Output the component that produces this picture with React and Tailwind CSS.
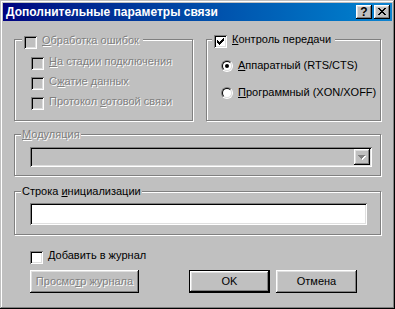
import React from 'react';

const raised = 'shadow-[inset_-1px_-1px_0_#000,inset_1px_1px_0_#fff,inset_-2px_-2px_0_#808080,inset_2px_2px_0_#dfdfdf]';
const sunken = 'shadow-[inset_1px_1px_0_#808080,inset_-1px_-1px_0_#fff,inset_2px_2px_0_#000,inset_-2px_-2px_0_#dfdfdf]';
const dim = 'text-[#808080] [text-shadow:1px_1px_0_#fff]';

const Check = ({ checked, disabled }) => (
  <span className={`relative block w-[13px] h-[13px] shrink-0 ${disabled ? 'bg-[#c0c0c0]' : 'bg-white'} ${sunken}`}>
    {checked && (
      <svg className="absolute left-[3px] top-[3px]" width="7" height="7" viewBox="0 0 7 7" shapeRendering="crispEdges">
        <path d="M6 0h1v1h-1z M5 1h2v1h-2z M0 2h1v1h-1z M4 2h3v1h-3z M0 3h2v1h-2z M3 3h3v1h-3z M0 4h5v1h-5z M1 5h3v1h-3z M2 6h1v1h-1z" fill="#000" />
      </svg>
    )}
  </span>
);

const Radio = ({ checked }) => (
  <span className="block w-[12px] h-[12px] shrink-0 rounded-full border border-t-[#808080] border-l-[#808080] border-r-white border-b-white">
    <span className="flex items-center justify-center w-full h-full rounded-full bg-white border border-t-black border-l-black border-r-[#dfdfdf] border-b-[#dfdfdf]">
      {checked && <span className="block w-[4px] h-[4px] rounded-full bg-black" />}
    </span>
  </span>
);

// label text sits with its cap top level with the box top, like the old dialogs
const Label = ({ children, disabled, className = '' }) => (
  <span className={`leading-[11px] -mt-[1px] whitespace-nowrap ${disabled ? dim : 'text-black'} ${className}`}>{children}</span>
);

const CheckRow = ({ checked, disabled, children, className = '' }) => (
  <div className={`flex items-start gap-[5px] ${className}`}>
    <Check checked={checked} disabled={disabled} />
    <Label disabled={disabled}>{children}</Label>
  </div>
);

const Group = ({ className = '', legend, legendClass = '', children }) => (
  <div className={`relative border border-[#808080] shadow-[1px_1px_0_#fff,inset_1px_1px_0_#fff] ${className}`}>
    <div className={`absolute bg-[#c0c0c0] ${legendClass}`}>{legend}</div>
    {children}
  </div>
);

const Button = ({ children, disabled, isDefault, className = '' }) => (
  <div className={`h-[23px] ${isDefault ? 'border border-black' : ''} ${className}`}>
    <div className={`h-full flex items-center justify-center bg-[#c0c0c0] ${raised} ${disabled ? dim : 'text-black'}`}>
      {children}
    </div>
  </div>
);

export default function App() {
  return (
    <div className="w-[395px] h-[309px] bg-[#c0c0c0] p-[3px] flex flex-col font-['Liberation_Sans',Arial,sans-serif] text-[11px] shadow-[inset_-1px_-1px_0_#000,inset_1px_1px_0_#c0c0c0,inset_-2px_-2px_0_#808080,inset_2px_2px_0_#fff]">
      {/* title bar */}
      <div className="h-[18px] flex items-center justify-between bg-gradient-to-r from-[#000080] to-[#1084d0] pl-[3px] pr-[2px]">
        <span className="text-white font-bold text-[12px] leading-none whitespace-nowrap">Дополнительные параметры связи</span>
        <div className="flex gap-[2px]">
          <div className={`w-[16px] h-[14px] bg-[#c0c0c0] ${raised} flex items-center justify-center`}>
            <span className="font-bold text-[12px] leading-none text-black -mt-[1px]">?</span>
          </div>
          <div className={`w-[16px] h-[14px] bg-[#c0c0c0] ${raised} flex items-center justify-center`}>
            <svg width="8" height="7" viewBox="0 0 8 7" shapeRendering="crispEdges" className="-mt-[1px]">
              <path d="M0 0h2v1h-2z M6 0h2v1h-2z M1 1h2v1h-2z M5 1h2v1h-2z M2 2h4v1h-4z M3 3h2v1h-2z M2 4h4v1h-4z M1 5h2v1h-2z M5 5h2v1h-2z M0 6h2v1h-2z M6 6h2v1h-2z" fill="#000" />
            </svg>
          </div>
        </div>
      </div>

      {/* body */}
      <div className="flex flex-col pl-[11px]">
        <div className="flex mt-[18px]">
          <Group
            className="w-[179px] h-[82px] pl-[16px] pt-[17px]"
            legendClass="left-[7px] top-[-4px] pl-[2px] pr-[4px]"
            legend={<CheckRow disabled><u>О</u>бработка ошибок</CheckRow>}
          >
            <div className="flex flex-col gap-[7px]">
              <CheckRow disabled><u>Н</u>а стадии подключения</CheckRow>
              <CheckRow disabled>С<u>ж</u>атие данных</CheckRow>
              <CheckRow disabled>Протокол <u>с</u>отовой связи</CheckRow>
            </div>
          </Group>
          <Group
            className="w-[175px] h-[82px] ml-[13px] pl-[14px] pt-[20px]"
            legendClass="left-[5px] top-[-5px] pl-[2px] pr-[4px]"
            legend={<CheckRow checked><u>К</u>онтроль передачи</CheckRow>}
          >
            <div className="flex flex-col gap-[15px]">
              <div className="flex items-start gap-[5px]">
                <Radio checked />
                <Label className="mt-0"><u>А</u>ппаратный (RTS/CTS)</Label>
              </div>
              <div className="flex items-start gap-[5px]">
                <Radio />
                <Label className="mt-0"><u>П</u>рограммный (XON/XOFF)</Label>
              </div>
            </div>
          </Group>
        </div>

        <Group
          className="w-[367px] h-[42px] mt-[13px] pl-[15px] pt-[12px]"
          legendClass="left-[6px] top-[-7px] px-[1px] leading-[13px]"
          legend={<span className={dim}><u>М</u>одуляция</span>}
        >
          <div className={`w-[342px] h-[20px] bg-[#c0c0c0] ${sunken} flex justify-end items-center pr-[2px]`}>
            <div className={`w-[16px] h-[16px] bg-[#c0c0c0] ${raised} flex items-center justify-center`}>
              <svg width="8" height="5" viewBox="0 0 8 5" shapeRendering="crispEdges">
                <path d="M1 1h7v1h-7z M2 2h5v1h-5z M3 3h3v1h-3z M4 4h1v1h-1z" fill="#fff" />
                <path d="M0 0h7v1h-7z M1 1h5v1h-5z M2 2h3v1h-3z M3 3h1v1h-1z" fill="#808080" />
              </svg>
            </div>
          </div>
        </Group>

        <Group
          className="w-[367px] h-[44px] mt-[15px] pl-[15px] pt-[11px]"
          legendClass="left-[6px] top-[-7px] px-[1px] leading-[13px]"
          legend={<span className="text-black">Строка <u>и</u>нициализации</span>}
        >
          <div className={`w-[337px] h-[22px] bg-white ${sunken}`} />
        </Group>

        <CheckRow className="mt-[16px] ml-[16px]"><u>Д</u>обавить в журнал</CheckRow>

        <div className="flex mt-[6px] ml-[16px]">
          <Button disabled className="w-[109px]">Просмо<u>т</u>р журнала</Button>
          <Button isDefault className="w-[81px] ml-[50px]">OK</Button>
          <Button className="w-[81px] ml-[6px]">Отмена</Button>
        </div>
      </div>
    </div>
  );
}
